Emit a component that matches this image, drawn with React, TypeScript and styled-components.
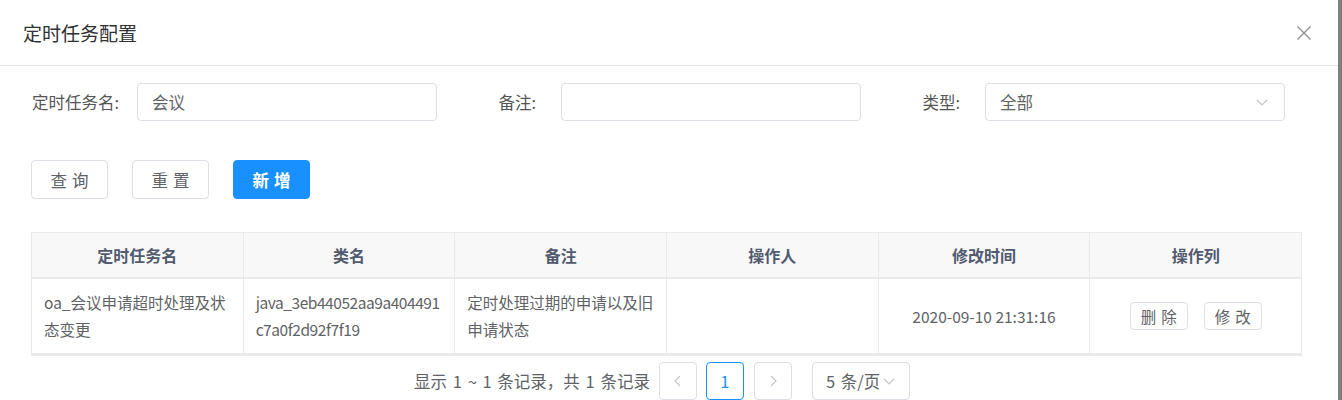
import React from "react";
import styled, { createGlobalStyle } from "styled-components";

const Global = createGlobalStyle`
  html, body { margin: 0; padding: 0; }
  body {
    background: #7f7f7f;
    font-family: "Microsoft YaHei", "Noto Sans CJK SC", sans-serif;
    color: #606266;
  }
`;

const Modal = styled.div`
  width: 1338px;
  height: 400px;
  background: #fff;
  overflow: hidden;
`;

const Header = styled.div`
  height: 66px;
  box-sizing: border-box;
  padding: 0 26px 0 23px;
  display: flex;
  align-items: center;
  justify-content: space-between;
  border-bottom: 1px solid #e8e8e8;
`;

const Title = styled.div`
  font-size: 19px;
  line-height: 24px;
  color: #303133;
`;

const Close = styled.span`
  display: flex;
  width: 16px;
  height: 16px;
  color: #8c8c8c;
`;

const FormRow = styled.div`
  display: flex;
  gap: 19px;
  padding: 17px 0 0 32px;
`;

const FormItem = styled.div`
  display: flex;
  align-items: center;
`;

const Label = styled.label`
  width: 105px;
  box-sizing: border-box;
  padding-right: 25px;
  text-align: right;
  white-space: nowrap;
  font-size: 16.5px;
  color: #555;
`;

const Field = styled.div`
  width: 300px;
  height: 38px;
  box-sizing: border-box;
  border: 1px solid #dcdfe6;
  border-radius: 4px;
  padding: 0 14px;
  display: flex;
  align-items: center;
  justify-content: space-between;
  font-size: 16.5px;
  color: #606266;
`;

const Arrow = styled.span`
  display: flex;
  color: #c0c4cc;
`;

const ButtonRow = styled.div`
  display: flex;
  gap: 24px;
  padding: 39px 0 0 31px;
`;

const Button = styled.button<{ $primary?: boolean }>`
  width: 77px;
  height: 39px;
  box-sizing: border-box;
  border-radius: 4px;
  border: 1px solid ${(p) => (p.$primary ? "#1890ff" : "#dcdfe6")};
  background: ${(p) => (p.$primary ? "#1890ff" : "#fff")};
  color: ${(p) => (p.$primary ? "#fff" : "#606266")};
  font-family: inherit;
  font-size: 16.5px;
  font-weight: ${(p) => (p.$primary ? 600 : 400)};
  letter-spacing: 5px;
  padding: 0 0 0 5px;
`;

const Table = styled.div`
  margin: 33px 0 0 31px;
  width: 1271px;
  border: 1px solid #e8eaec;
  border-right: none;
  box-sizing: border-box;
`;

const Grid = styled.div<{ $head?: boolean }>`
  display: grid;
  grid-template-columns: repeat(6, 1fr);
  height: ${(p) => (p.$head ? "46px" : "76px")};
  background: ${(p) => (p.$head ? "#f8f8f9" : "#fff")};
  border-bottom: 2px solid #e8eaec;
  box-sizing: border-box;
`;

const HeadCell = styled.div`
  display: flex;
  align-items: center;
  justify-content: center;
  border-right: 1px solid #e8eaec;
  font-size: 16px;
  font-weight: 600;
  color: #515a6e;
`;

const Cell = styled.div<{ $center?: boolean; $tight?: boolean }>`
  display: flex;
  align-items: center;
  justify-content: ${(p) => (p.$center ? "center" : "flex-start")};
  gap: 16px;
  padding: 0 12px;
  border-right: 1px solid #e8eaec;
  font-size: 15.5px;
  line-height: 27px;
  letter-spacing: ${(p) => (p.$tight ? "-0.45px" : "0")};
  color: #606266;
  word-break: break-all;
`;

const SmallButton = styled.button`
  height: 28px;
  width: 58px;
  box-sizing: border-box;
  border: 1px solid #dcdfe6;
  border-radius: 4px;
  background: #fff;
  color: #606266;
  font-family: inherit;
  font-size: 15.5px;
  letter-spacing: 5px;
  padding: 0 0 0 5px;
`;

const Pager = styled.div`
  display: flex;
  align-items: center;
  justify-content: center;
  padding: 6px 14px 0 0;
  font-size: 16.5px;
  color: #606266;
`;

const PagerText = styled.span`
  margin-right: 9px;
  word-spacing: 2px;
`;

const PageBox = styled.div<{ $active?: boolean; $gap?: number }>`
  width: 38px;
  height: 38px;
  box-sizing: border-box;
  border: 1px solid ${(p) => (p.$active ? "#1890ff" : "#dcdfe6")};
  border-radius: 4px;
  display: flex;
  align-items: center;
  justify-content: center;
  color: ${(p) => (p.$active ? "#1890ff" : "#c0c4cc")};
  margin-right: ${(p) => p.$gap ?? 9}px;
`;

const SizeSelect = styled.div`
  width: 98px;
  height: 38px;
  box-sizing: border-box;
  border: 1px solid #dcdfe6;
  border-radius: 4px;
  display: flex;
  align-items: center;
  padding-left: 13px;
  gap: 1px;
  color: #606266;
  word-spacing: 2px;
`;

const Chevron = ({ dir }: { dir: "down" | "left" | "right" }) => {
  const d =
    dir === "down" ? "M3 6 L8 11 L13 6" : dir === "left" ? "M10 3 L5 8 L10 13" : "M6 3 L11 8 L6 13";
  return (
    <svg width="16" height="16" viewBox="0 0 16 16" fill="none">
      <path d={d} stroke="currentColor" strokeWidth="1.1" />
    </svg>
  );
};

export default function App() {
  return (
    <>
      <Global />
      <Modal>
        <Header>
          <Title>定时任务配置</Title>
          <Close>
            <svg width="16" height="16" viewBox="0 0 16 16">
              <path d="M1.5 1.5 L14.5 14.5 M14.5 1.5 L1.5 14.5" stroke="currentColor" strokeWidth="1.3" />
            </svg>
          </Close>
        </Header>
        <FormRow>
          <FormItem>
            <Label>定时任务名:</Label>
            <Field>会议</Field>
          </FormItem>
          <FormItem>
            <Label>备注:</Label>
            <Field />
          </FormItem>
          <FormItem>
            <Label>类型:</Label>
            <Field>
              全部
              <Arrow>
                <Chevron dir="down" />
              </Arrow>
            </Field>
          </FormItem>
        </FormRow>
        <ButtonRow>
          <Button>查询</Button>
          <Button>重置</Button>
          <Button $primary>新增</Button>
        </ButtonRow>
        <Table>
          <Grid $head>
            <HeadCell>定时任务名</HeadCell>
            <HeadCell>类名</HeadCell>
            <HeadCell>备注</HeadCell>
            <HeadCell>操作人</HeadCell>
            <HeadCell>修改时间</HeadCell>
            <HeadCell>操作列</HeadCell>
          </Grid>
          <Grid>
            <Cell>oa_会议申请超时处理及状态变更</Cell>
            <Cell $tight>java_3eb44052aa9a404491c7a0f2d92f7f19</Cell>
            <Cell>定时处理过期的申请以及旧申请状态</Cell>
            <Cell />
            <Cell $center>2020-09-10 21:31:16</Cell>
            <Cell $center>
              <SmallButton>删除</SmallButton>
              <SmallButton>修改</SmallButton>
            </Cell>
          </Grid>
        </Table>
        <Pager>
          <PagerText>显示 1 ~ 1 条记录，共 1 条记录</PagerText>
          <PageBox>
            <Chevron dir="left" />
          </PageBox>
          <PageBox $active $gap={10}>1</PageBox>
          <PageBox $gap={20}>
            <Chevron dir="right" />
          </PageBox>
          <SizeSelect>
            5 条/页
            <Arrow>
              <Chevron dir="down" />
            </Arrow>
          </SizeSelect>
        </Pager>
      </Modal>
    </>
  );
}
